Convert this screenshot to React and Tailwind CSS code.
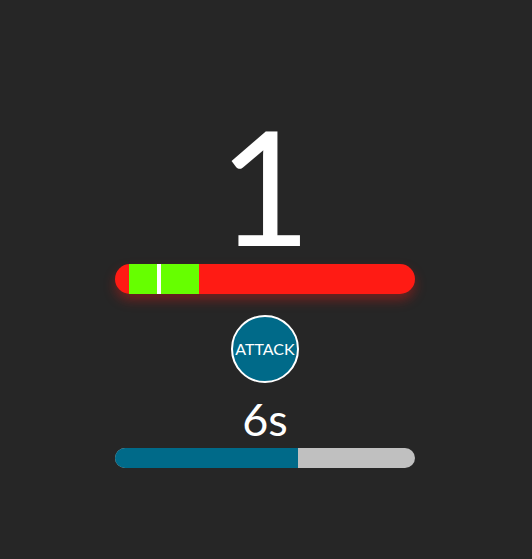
import React from "react";

function App() {
  const timeLeft = 183;
  return (
    <div className="min-h-screen w-full bg-[#262626] flex flex-col items-center pt-[104px] pr-[2px] font-['Lato',sans-serif] text-white">
      <div className="text-[160px] leading-none font-normal">1</div>

      <div className="w-[300px] h-[30px] rounded-full bg-[#ff1b14] flex pl-[14px] shadow-[0_6px_12px_rgba(255,27,20,0.35)]">
        <div className="w-[70px] h-full bg-[#66ff00] flex pl-[28px]">
          <div className="w-[4px] h-full bg-white"></div>
        </div>
      </div>

      <button className="mt-[21px] w-[68px] h-[68px] rounded-full bg-[#006a89] border-2 border-white flex items-center justify-center text-[16px] leading-none text-white">
        ATTACK
      </button>

      <div className="mt-[14px] text-[45px] leading-none">6s</div>

      <div className="mt-[6px] w-[300px] h-[20px] rounded-full bg-[#c0c0c0] overflow-hidden flex">
        <div className="h-full bg-[#006a89]" style={{ width: timeLeft }}></div>
      </div>
    </div>
  );
}

export default App;
